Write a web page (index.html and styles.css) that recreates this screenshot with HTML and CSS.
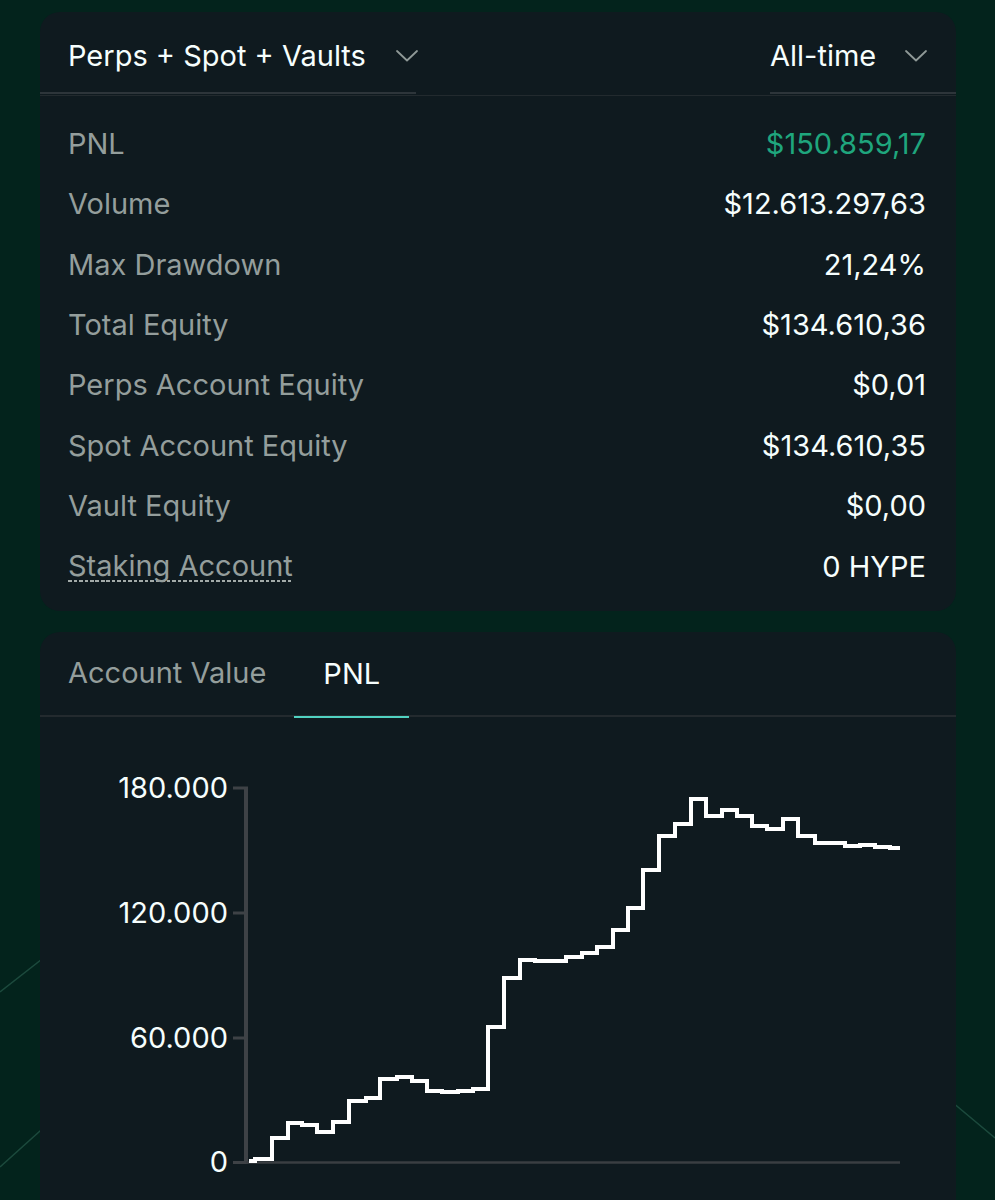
FILE: index.html
```html
<!DOCTYPE html>
<html lang="en">
<head>
<meta charset="utf-8">
<title>Portfolio</title>
<link rel="stylesheet" href="styles.css">
</head>
<body>
<svg class="bg-lines" width="995" height="1200" viewBox="0 0 995 1200" aria-hidden="true">
  <line x1="0" y1="992" x2="60" y2="945" />
  <line x1="0" y1="1167" x2="60" y2="1113" />
  <line x1="940" y1="1092" x2="995" y2="1138" />
</svg>
<main class="page">
  <section class="card summary">
    <header class="summary-head">
      <button class="dropdown dropdown-left">
        <span class="dd-text">Perps + Spot + Vaults</span>
        <svg class="chev" width="22" height="12" viewBox="0 0 22 12"><polyline points="1,1 11,10.5 21,1"/></svg>
      </button>
      <div class="head-spacer"></div>
      <button class="dropdown dropdown-right">
        <span class="dd-text">All-time</span>
        <svg class="chev" width="22" height="12" viewBox="0 0 22 12"><polyline points="1,1 11,10.5 21,1"/></svg>
      </button>
    </header>
    <div class="rows">
      <div class="row"><span class="label">PNL</span><span class="value positive">$150.859,17</span></div>
      <div class="row"><span class="label">Volume</span><span class="value">$12.613.297,63</span></div>
      <div class="row"><span class="label">Max Drawdown</span><span class="value">21,24%</span></div>
      <div class="row"><span class="label">Total Equity</span><span class="value">$134.610,36</span></div>
      <div class="row"><span class="label">Perps Account Equity</span><span class="value">$0,01</span></div>
      <div class="row"><span class="label">Spot Account Equity</span><span class="value">$134.610,35</span></div>
      <div class="row"><span class="label">Vault Equity</span><span class="value">$0,00</span></div>
      <div class="row"><span class="label dashed">Staking Account</span><span class="value">0 HYPE</span></div>
    </div>
  </section>

  <section class="card chart-card">
    <nav class="tabs">
      <div class="tab">Account Value</div>
      <div class="tab active">PNL</div>
    </nav>
    <div class="chart">
      <svg class="chart-svg" width="916" height="520" viewBox="40 718 916 520">
        <g class="axis">
          <line x1="246" y1="789" x2="246" y2="1164" class="y-axis"/>
          <line x1="233" y1="789" x2="248" y2="789" class="tick"/>
          <line x1="233" y1="914" x2="248" y2="914" class="tick"/>
          <line x1="233" y1="1039" x2="248" y2="1039" class="tick"/>
          <line x1="233" y1="1163.5" x2="248" y2="1163.5" class="tick"/>
          <line x1="246" y1="1163.5" x2="900" y2="1163.5" class="x-axis"/>
        </g>
        <g class="ylabels">
          <text x="228" y="799">180.000</text>
          <text x="228" y="924">120.000</text>
          <text x="228" y="1049">60.000</text>
          <text x="228" y="1173">0</text>
        </g>
        <path class="pnl-line" d="M249,1162 H255 V1160 H272 V1139 H288 V1124 H302 V1126 H317 V1133 H333 V1123 H349 V1102 H366 V1099 H380 V1080 H397 V1078 H412 V1082 H427 V1092 H442 V1093 H458 V1092 H473 V1090 H488 V1028 H504 V979 H520 V961 H535 V962 H566 V958 H582 V954 H597 V948 H613 V931 H628 V909 H643 V871 H659 V837 H675 V825 H691 V800 H706 V817 H722 V811 H737 V817 H752 V827 H767 V830 H783 V820 H798 V837 H815 V844 H845 V847 H860 V846 H875 V848 H890 V849 H900"/>
      </svg>
    </div>
  </section>
</main>
</body>
</html>
```

FILE: styles.css
```css
* {
  box-sizing: border-box;
}

html, body {
  margin: 0;
  padding: 0;
}

body {
  background: #03231c;
  font-family: Inter, "Noto Sans", "Liberation Sans", sans-serif;
  color: #f6fefd;
  position: relative;
  overflow: hidden;
  height: 1200px;
}

.bg-lines {
  position: absolute;
  left: 0;
  top: 0;
  z-index: 0;
}

.bg-lines line {
  stroke: #1c4a3d;
  stroke-width: 1.5;
}

.page {
  position: relative;
  z-index: 1;
  padding: 12px 39px 0 40px;
  display: flex;
  flex-direction: column;
  gap: 21px;
}

.card {
  background: #0f1a1f;
  border-radius: 20px;
}

/* ---------- summary card ---------- */
.summary-head {
  display: flex;
  align-items: flex-start;
  height: 84px;
  border-bottom: 1px solid #222a2e;
}

.dropdown {
  appearance: none;
  background: none;
  border: none;
  border-bottom: 2px solid #2d353a;
  height: 82px;
  padding: 6px 0 0 0;
  display: flex;
  align-items: center;
  font: inherit;
  font-size: 29px;
  color: #f6fefd;
  cursor: pointer;
  text-align: left;
  flex-shrink: 0;
}

.dd-text {
  white-space: nowrap;
  flex-shrink: 0;
}

.dropdown-left {
  width: 376px;
  padding-left: 28px;
  gap: 30px;
}

.dropdown-right {
  width: 186px;
  gap: 29px;
  justify-content: flex-start;
}

.head-spacer {
  flex: 1;
}

.chev {
  display: block;
  margin-top: 2px;
  flex-shrink: 0;
}

.chev polyline {
  fill: none;
  stroke: #8f9997;
  stroke-width: 1.8;
  stroke-linecap: round;
  stroke-linejoin: round;
}

.rows {
  padding: 17px 30px 15px 28px;
  display: flex;
  flex-direction: column;
}

.row {
  height: 60.43px;
  display: flex;
  align-items: center;
  justify-content: space-between;
  font-size: 29px;
}

.label {
  color: #949e9c;
}

.label.dashed {
  line-height: 32px;
  background-image: repeating-linear-gradient(to right, #a3aba9 0 3.5px, transparent 3.5px 5.5px);
  background-size: 100% 2px;
  background-position: left bottom;
  background-repeat: no-repeat;
}

.value {
  color: #f6fefd;
}

.value.positive {
  color: #1fa67d;
}

/* ---------- chart card ---------- */
.chart-card {
  border-bottom-left-radius: 0;
  border-bottom-right-radius: 0;
}

.tabs {
  display: flex;
  height: 85px;
  border-bottom: 2px solid #232a2e;
}

.tab {
  padding: 0 28px 4px 28px;
  display: flex;
  align-items: center;
  font-size: 29px;
  color: #949e9c;
  height: 85px;
  white-space: nowrap;
}

.tab.active {
  color: #f6fefd;
  padding: 0 29px 2px 29px;
  border-bottom: 2px solid #50d2c1;
  height: 86px;
}

.chart {
  height: 520px;
}

.chart-svg {
  display: block;
}

.y-axis {
  stroke: #3e4246;
  stroke-width: 4;
}

.tick {
  stroke: #3e4246;
  stroke-width: 3;
}

.x-axis {
  stroke: #3a3e42;
  stroke-width: 2.5;
}

.ylabels text {
  fill: #f6fefd;
  font-family: Inter, "Noto Sans", "Liberation Sans", sans-serif;
  font-size: 29px;
  text-anchor: end;
}

.pnl-line {
  fill: none;
  stroke: #ffffff;
  stroke-width: 4;
  stroke-linejoin: miter;
  stroke-linecap: butt;
}
```
